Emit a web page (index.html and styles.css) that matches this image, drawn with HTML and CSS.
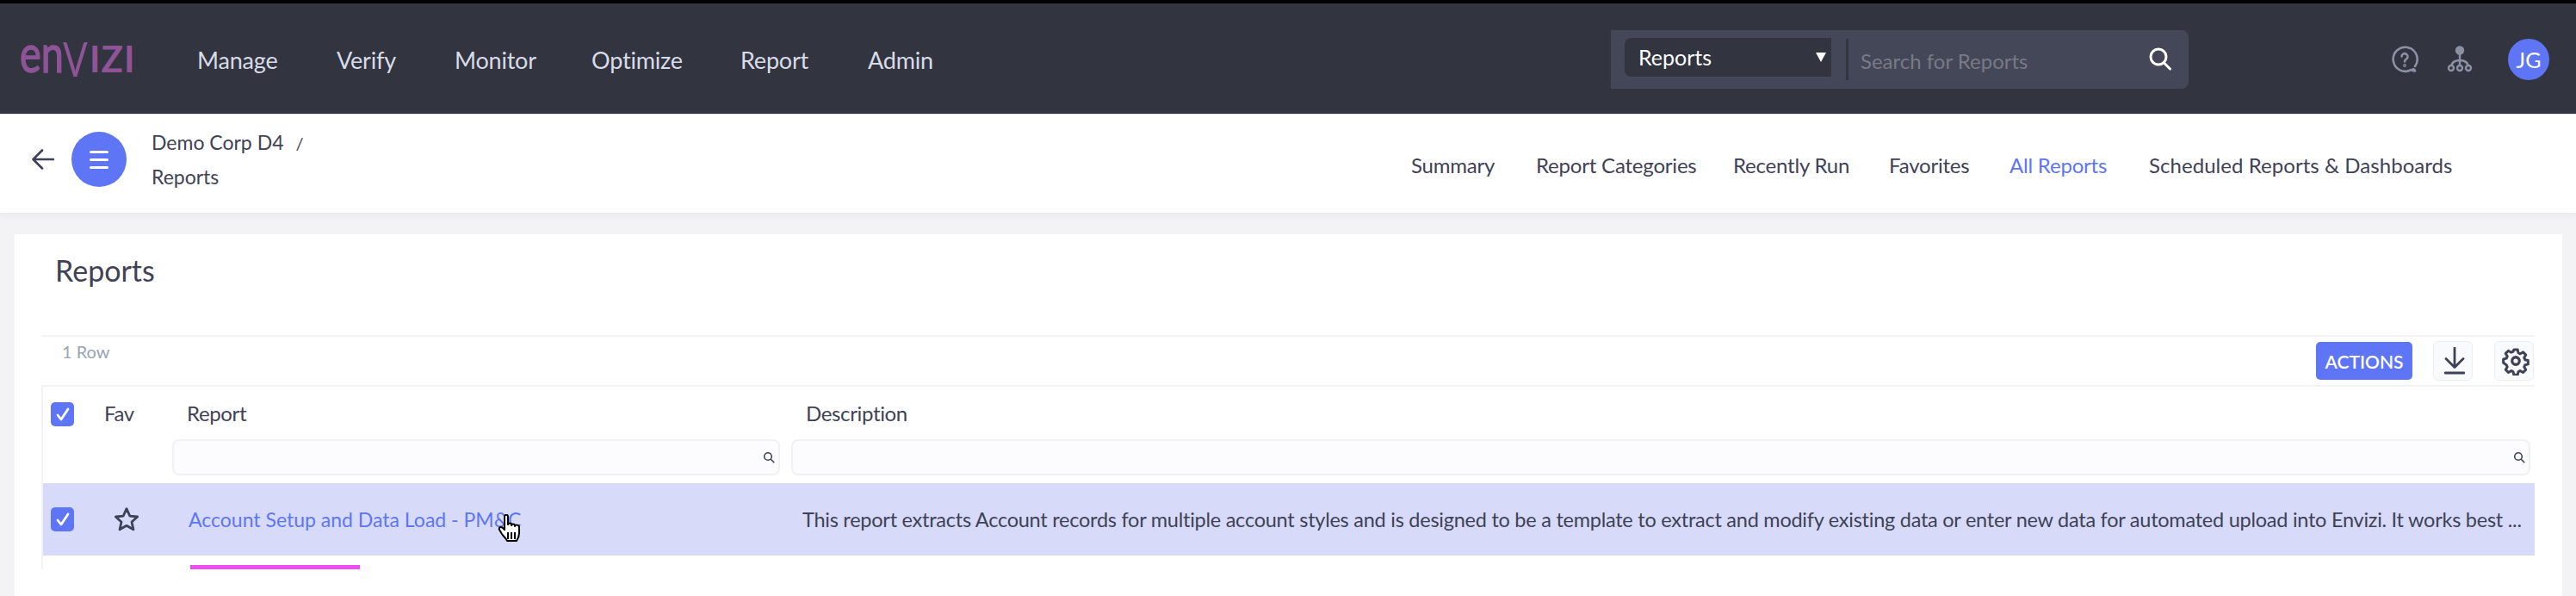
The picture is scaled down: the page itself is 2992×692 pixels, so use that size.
FILE: index.html
```html
<!DOCTYPE html>
<html lang="en">
<head>
<meta charset="utf-8">
<title>Reports</title>
<link rel="stylesheet" href="styles.css">
</head>
<body>
<header class="topbar">
  <div class="logo"><span class="logo-low">en</span><span class="logo-v">V</span><span class="logo-cap">IZI</span></div>
  <nav class="mainnav">
    <a>Manage</a><a>Verify</a><a>Monitor</a><a>Optimize</a><a>Report</a><a>Admin</a>
  </nav>
  <div class="searchbox">
    <div class="scope"><span>Reports</span><i class="caret"></i></div>
    <div class="search-div"></div>
    <div class="placeholder">Search for Reports</div>
    <svg class="search-ico" viewBox="0 0 28 28" width="28" height="28" fill="none" stroke="#fff" stroke-width="3" stroke-linecap="round"><circle cx="12" cy="12" r="9"/><path d="M18.500 19l7 7"/></svg>
  </div>
  <svg class="help" viewBox="0 0 32 32" width="32" height="32" fill="none" stroke="#8b90a3" stroke-width="2.600" stroke-linecap="round" stroke-linejoin="round"><path d="M28 24a14 14 0 1 0-4.500 4l3.500 1.500q2.500 0-1-2.500"/><path d="M12.500 12.500a3.500 3.500 0 1 1 5.500 3c-1.500 1-2 1.500-2 3"/><circle cx="16" cy="23" r=".6"/></svg>
  <svg class="org" viewBox="0 0 30 32" width="30" height="32" fill="none" stroke="#8b90a3" stroke-width="2.400"><circle cx="15" cy="5.500" r="4" fill="#8b90a3"/><path d="M15 9v17M15 17c-6 0-10 3-10 9M15 17c6 0 10 3 10 9"/><circle cx="5" cy="26" r="3" fill="#32343f"/><circle cx="15" cy="26" r="3" fill="#32343f"/><circle cx="25" cy="26" r="3" fill="#32343f"/></svg>
  <div class="avatar">JG</div>
</header>
<section class="subbar">
  <svg class="back" viewBox="0 0 26 26" width="26" height="26" fill="none" stroke="#3f4257" stroke-width="2.600" stroke-linecap="round" stroke-linejoin="round"><path d="M25 13H2M12 2.500L1.500 13 12 23.500"/></svg>
  <div class="menu-btn"><i></i><i></i><i></i></div>
  <div class="crumbs">
    <div class="crumb-a">Demo Corp D4<span class="slash">/</span></div>
    <div class="crumb-b">Reports</div>
  </div>
  <nav class="tabs">
    <a>Summary</a><a>Report Categories</a><a>Recently Run</a><a>Favorites</a><a class="active">All Reports</a><a class="tab-last">Scheduled Reports &amp; Dashboards</a>
  </nav>
</section>
<main class="page">
  <section class="card">
    <h1 class="title">Reports</h1>
    <div class="toolbar">
      <span class="count">1 Row</span>
      <button class="actions">ACTIONS</button>
      <button class="tool dl"><svg viewBox="0 0 24 32" width="24" height="32" fill="none" stroke="#3f4257" stroke-width="2.800" stroke-linecap="round" stroke-linejoin="round"><path d="M12 1v22M2 13.500L12 23.500l10-10M1 30h22"/></svg></button>
      <button class="tool gear"><svg viewBox="0 0 24 24" width="34" height="34" fill="none" stroke="#3f4257" stroke-width="2.300" stroke-linejoin="round"><circle cx="12" cy="12" r="3"/><path d="M10.300 2h3.400l.6 2.900 1.700.8 2.600-1.500 2.400 2.400-1.500 2.600.8 1.800 2.700.6v3.400l-2.700.6-.8 1.800 1.500 2.500-2.400 2.400-2.600-1.500-1.700.8-.6 2.800h-3.400l-.6-2.800-1.700-.8-2.600 1.500-2.400-2.400 1.500-2.500-.8-1.800L1 13.800v-3.400l2.700-.6.8-1.800L3 5.400 5.400 3 8 4.500l1.700-.8z" transform="translate(12 12) scale(.92) translate(-12 -12)"/></svg></button>
    </div>
    <div class="table">
      <div class="thead">
        <div class="th th-check"><span class="check"><svg viewBox="0 0 28 28" width="28" height="28" fill="none" stroke="#fff" stroke-width="2.800" stroke-linecap="round" stroke-linejoin="round"><path d="M8 15l4 5 8-12"/></svg></span></div>
        <div class="th">Fav</div>
        <div class="th">Report</div>
        <div class="th">Description</div>
        <div class="tf"></div>
        <div class="tf"></div>
        <div class="tf"><div class="filter filter-a"><svg viewBox="0 0 14 14" width="14" height="14" fill="none" stroke="#3f4257" stroke-width="1.600" stroke-linecap="round"><circle cx="6" cy="6" r="4.300"/><path d="M9.300 9.300l3.500 3.500"/></svg></div></div>
        <div class="tf"><div class="filter filter-b"><svg viewBox="0 0 14 14" width="14" height="14" fill="none" stroke="#3f4257" stroke-width="1.600" stroke-linecap="round"><circle cx="6" cy="6" r="4.300"/><path d="M9.300 9.300l3.500 3.500"/></svg></div></div>
      </div>
      <div class="row">
        <div class="td td-check"><span class="check"><svg viewBox="0 0 28 28" width="28" height="28" fill="none" stroke="#fff" stroke-width="2.800" stroke-linecap="round" stroke-linejoin="round"><path d="M8 15l4 5 8-12"/></svg></span></div>
        <div class="td td-star"><svg viewBox="0 0 28 28" width="30" height="30" fill="none" stroke="#3f4257" stroke-width="2.600" stroke-linejoin="round"><path d="M14 2.500l3.500 7.800 8.300.9-6.200 5.600 1.800 8.200L14 20.800 6.600 25l1.800-8.200-6.200-5.600 8.300-.9z"/></svg></div>
        <div class="td td-link"><a>Account Setup and Data Load - PM&amp;C</a></div>
        <div class="td td-desc">This report extracts Account records for multiple account styles and is designed to be a template to extract and modify existing data or enter new data for automated upload into Envizi. It works best ...</div>
        <svg class="cursor" viewBox="0 0 30 34" width="30" height="34" stroke="#000" stroke-width="2" stroke-linejoin="round" fill="#fff"><path d="M8 3c0-3 4-3 4 0v9c0-2 4-2 4 0v1c0-2 4-2 4 0v1c0-2 5-2 5 1v7c0 4-1 6-3 9H11c-1-3-4-5-6-8l-3-5c-1-3 2-4 4-2l2 2z"/><path d="M12 21v8M16 21v8M20 21v8" fill="none"/></svg>
      </div>
      <div class="mark"></div>
    </div>
  </section>
</main>
</body>
</html>
```
FILE: styles.css
```css
* { box-sizing: border-box; }
html, body { margin: 0; padding: 0; height: 100%; overflow: hidden; }
body {
  font-family: "Lato", "Noto Sans", sans-serif;
  color: #3f4257;
  background: #f3f3f6;
  border-top: 4px solid #000;
  width: 2992px;
  height: 692px;
}
.topbar {
  height: 129px;
  background: #32343f;
  display: flex;
  align-items: center;
  border-bottom: 1px solid #dfe0e5;
  padding: 2px 0 0 23px;
}
.logo {
  width: 206px;
  height: 60px;
  color: #8e5497;
  display: flex;
  align-items: center;
  font-weight: 700;
  line-height: 1;
  margin-top: -2px;
}
.logo-low {
  display: inline-block;
  width: 50px;
  font-size: 60px;
  font-weight: 400;
  -webkit-text-stroke: 1.500px #8e5497;
  transform: scaleX(.78);
  transform-origin: left center;
  margin-top: -14px;
}
.logo-v {
  display: inline-block;
  width: 31px;
  font-size: 56px;
  font-weight: 400;
  transform: scaleX(.76);
  transform-origin: left center;
}
.logo-cap { font-size: 42px; letter-spacing: 1px; }
.mainnav { display: flex; width: 1642px; }
.mainnav a { color: #d8dbe8; font-size: 27px; letter-spacing: -.2px; }
.mainnav a:nth-child(1) { width: 162px; }
.mainnav a:nth-child(2) { width: 137px; }
.mainnav a:nth-child(3) { width: 159px; }
.mainnav a:nth-child(4) { width: 173px; }
.mainnav a:nth-child(5) { width: 148px; }
.searchbox {
  width: 671px;
  height: 68px;
  margin-bottom: 1px;
  background: #444758;
  border-radius: 0 8px 8px 0;
  display: flex;
  align-items: center;
  padding-left: 16px;
}
.scope {
  width: 240px;
  height: 45px;
  margin-top: -5px;
  background: #32343f;
  border-radius: 8px 0 0 8px;
  color: #fff;
  font-size: 25px;
  display: flex;
  align-items: center;
  justify-content: space-between;
  padding: 0 6px 0 16px;
}
.caret { width: 0; height: 0; border-left: 6px solid transparent; border-right: 6px solid transparent; border-top: 11px solid #fff; }
.search-div { width: 3px; height: 48px; background: #32343f; margin: 0 14px 0 17px; }
.placeholder { flex: 1; color: #787a84; font-size: 24px; margin-top: 4px; }
.search-ico { margin-right: 19px; margin-top: -2px; }
.help { margin-left: 235px; }
.org { margin-left: 33px; }
.avatar {
  width: 48px; height: 48px; margin-left: 41px;
  border-radius: 50%;
  background: #5e76f5;
  color: #fff;
  font-size: 25px;
  display: flex; align-items: center; justify-content: center;
}
.subbar {
  height: 114px;
  background: #fff;
  display: flex;
  align-items: center;
  padding-left: 37px;
  box-shadow: 0 3px 8px rgba(60, 60, 90, .06);
  position: relative;
}
.back { margin-top: -10px; }
.menu-btn {
  width: 64px; height: 64px; margin-left: 20px; margin-top: -10px;
  border-radius: 50%;
  background: #5e76f5;
  display: flex; flex-direction: column; align-items: center; justify-content: center; gap: 6px;
}
.menu-btn i { width: 22px; height: 3px; background: #fff; border-radius: 2px; }
.crumbs { width: 1463px; margin-left: 29px; font-size: 23px; color: #3f4257; line-height: 39px; margin-top: -10px; }
.slash { margin-left: 14px; font-size: 20px; }
.tabs { display: flex; font-size: 24px; letter-spacing: -.2px; color: #3f4257; margin-top: 2px; }
.tabs a:nth-child(1) { width: 145px; }
.tabs a:nth-child(2) { width: 229px; }
.tabs a:nth-child(3) { width: 181px; }
.tabs a:nth-child(4) { width: 140px; }
.tabs a:nth-child(5) { width: 162px; }
.tabs .tab-last { letter-spacing: .05px; }
.tabs .active { color: #5e76f5; }
.page { padding: 25px 16px 0 17px; height: 445px; }
.card { background: #fff; height: 420px; padding: 0 32px 0 31px; }
.title {
  margin: 0;
  height: 117px;
  padding: 18px 0 0 16px;
  font-size: 34px;
  font-weight: 400;
  line-height: 48px;
  color: #3f4257;
}
.toolbar {
  height: 60px;
  border-top: 2px solid #f1f2f5;
  border-bottom: 2px solid #f1f2f5;
  display: flex;
  align-items: center;
  justify-content: flex-end;
  gap: 24px;
  padding-right: 1px;
}
.count { margin-right: auto; margin-left: 24px; margin-top: -22px; font-size: 20px; color: #9aa3b5; }
.actions {
  width: 112px; height: 44px;
  background: #5e76f5; color: #fff;
  border: 0; border-radius: 5px;
  font: 600 21px "Lato", sans-serif;
  padding: 0;
}
.tool {
  width: 46px; height: 46px;
  background: #f9fafc;
  border: 1px solid #eceef3;
  border-radius: 6px;
  padding: 0 0 0 3px;
  display: flex; align-items: center; justify-content: center;
}
.gear { margin-left: 1px; }
.table { border-left: 2px solid #f1f2f5; }
.thead {
  display: grid;
  grid-template-columns: 54px 96px 719px 1fr;
  grid-template-rows: 61px 51px;
}
.th { padding: 14px 0 0 17px; font-size: 24px; letter-spacing: -.35px; line-height: 34px; color: #3f4257; }
.th-check { padding: 18px 0 0 9px; }
.check { display: block; width: 27px; height: 28px; border-radius: 5px; background: #5e76f5; }
.filter {
  height: 42px;
  background: #fcfcfe;
  border: 2px solid #f0f1f5;
  border-radius: 8px;
  display: flex; align-items: center; justify-content: flex-end;
  padding-right: 4px;
}
.filter-a { margin-right: 13px; }
.filter-b { margin-right: 5px; }
.row {
  display: grid;
  grid-template-columns: 54px 96px 720px 1fr;
  height: 84px;
  background: #d7dbf9;
  align-items: center;
  position: relative;
}
.td { font-size: 24px; white-space: nowrap; min-width: 0; }
.td-check { padding-left: 9px; }
.td-star { padding-left: 28px; height: 30px; }
.td-link { padding-left: 19px; font-size: 23px; }
.td-link a { color: #5e76f5; }
.td-desc { padding-left: 12px; overflow: hidden; font-size: 23.500px; letter-spacing: -.25px; }
.cursor { position: absolute; left: 528px; top: 36px; }
.mark { height: 5px; width: 197px; margin: 11px 0 0 171px; background: #ee4ff0; }
```
